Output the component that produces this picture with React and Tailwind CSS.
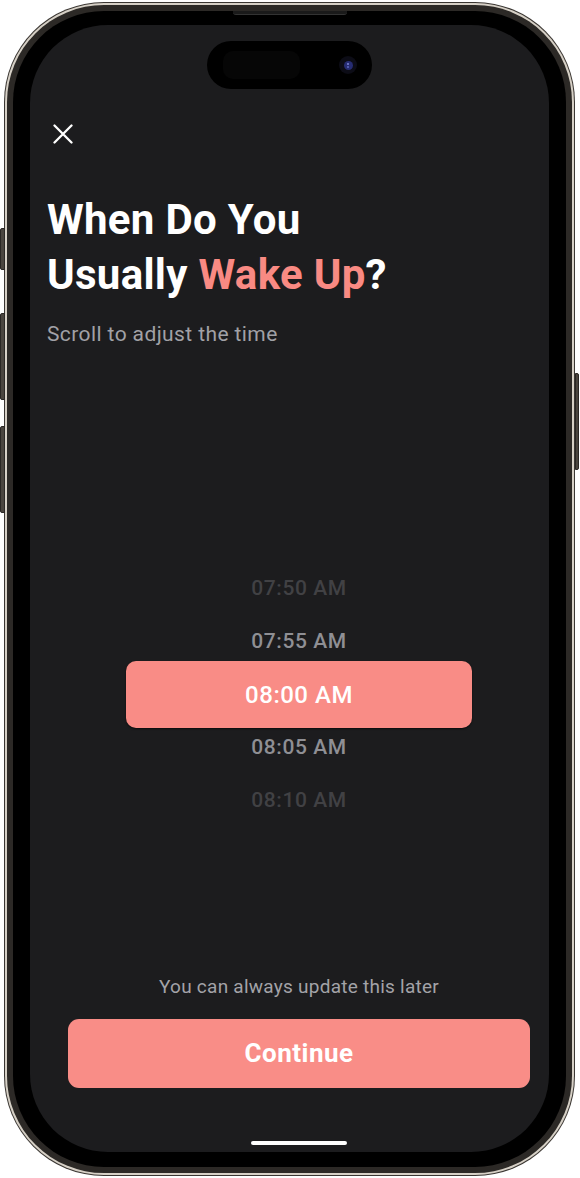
import React from "react";

const times = [
  { label: "07:50 AM", tone: "dim" },
  { label: "07:55 AM", tone: "mid" },
  { label: "08:00 AM", tone: "active" },
  { label: "08:05 AM", tone: "mid" },
  { label: "08:10 AM", tone: "dim" },
];

const CloseIcon = () => (
  <svg width="20" height="20" viewBox="0 0 20 20" fill="none">
    <path
      d="M1.5 1.5L18.5 18.5M18.5 1.5L1.5 18.5"
      stroke="white"
      strokeWidth="2.3"
      strokeLinecap="round"
    />
  </svg>
);

const TimeRow = ({ label, tone }) => {
  if (tone === "active") {
    return (
      <div className="-my-[7px] h-[67px] w-[346px] rounded-[10px] bg-[#f98c86] shadow-[0_1px_2px_rgba(0,0,0,0.6)] flex items-center justify-center">
        <span className="text-[24px] font-medium tracking-[0.5px] text-white">
          {label}
        </span>
      </div>
    );
  }
  return (
    <div
      className={
        "h-[53px] flex items-center justify-center text-[21px] font-medium tracking-[0.6px] " +
        (tone === "dim" ? "text-[#414144]" : "text-[#8f8f94]")
      }
    >
      {label}
    </div>
  );
};

const App = () => {
  return (
    <div className="relative w-[580px] h-[1178px] bg-white overflow-hidden font-['Roboto',sans-serif]">
      {/* side buttons */}
      <div className="absolute left-0 top-[228px] w-[5px] h-[42px] rounded-l-[2px] bg-[#4a453f] border border-[#2a2724]"></div>
      <div className="absolute left-0 top-[313px] w-[5px] h-[87px] rounded-l-[2px] bg-[#4a453f] border border-[#2a2724]"></div>
      <div className="absolute left-0 top-[426px] w-[5px] h-[87px] rounded-l-[2px] bg-[#4a453f] border border-[#2a2724]"></div>
      <div className="absolute right-[1px] top-[373px] w-[4px] h-[97px] rounded-r-[2px] bg-[#4a453f] border border-[#2a2724]"></div>

      <div className="pt-[2px] pl-[4px]">
        {/* frame */}
        <div className="w-[571px] h-[1174px] rounded-[100px] bg-[#3a3632] p-[1px]">
          <div className="w-full h-full rounded-[99px] bg-[#d6d0c6] p-[2px]">
            <div className="w-full h-full rounded-[97px] bg-[#2c2926] p-[6px]">
              <div className="relative w-full h-full rounded-[91px] bg-black px-[17px] py-[14px]">
                <div className="absolute top-0 left-1/2 -translate-x-1/2 w-[114px] h-[4px] rounded-b-[3px] bg-[#1a1a1a] border-b border-[#333]"></div>

                {/* screen */}
                <div className="w-[519px] h-[1127px] rounded-[78px] bg-[#1c1c1e] overflow-hidden flex flex-col">
                  <div className="self-center mt-[16px] h-[48px] w-[165px] rounded-full bg-black flex items-center justify-between pl-[16px] pr-[15px]">
                    <div className="w-[77px] h-[28px] rounded-[10px] bg-[#060606]"></div>
                    <div className="w-[18px] h-[18px] rounded-full bg-[#0c0c16] flex items-center justify-center">
                      <div className="w-[9px] h-[9px] rounded-full bg-[#262c72] flex flex-col items-center justify-center gap-[1px]">
                        <div className="w-[2px] h-[2px] rounded-full bg-[#7c86d8]"></div>
                        <div className="w-[2px] h-[2px] rounded-full bg-[#5c66c0]"></div>
                      </div>
                    </div>
                  </div>

                  <div className="ml-[17px] w-[504px] flex-1 flex flex-col">
                    <div className="mt-[35px] ml-[6px] w-[20px] h-[20px]">
                      <CloseIcon />
                    </div>

                    <h1 className="mt-[48px] text-[42px] leading-[55px] font-bold tracking-[0.3px] text-white">
                      When Do You
                      <br />
                      Usually <span className="text-[#f98a83]">Wake Up</span>?
                    </h1>
                    <p className="mt-[18px] text-[21px] leading-[28px] tracking-[0.4px] text-[#a1a1a6]">
                      Scroll to adjust the time
                    </p>

                    <div className="mt-[214px] flex flex-col items-center">
                      {times.map((t) => (
                        <TimeRow key={t.label} label={t.label} tone={t.tone} />
                      ))}
                    </div>

                    <div className="flex-1"></div>

                    <p className="text-center text-[19px] leading-[24px] tracking-[0.25px] text-[#a3a3a8]">
                      You can always update this later
                    </p>
                    <button className="mt-[20px] mx-[21px] h-[69px] rounded-[11px] bg-[#f98d87] text-white text-[26px] font-bold tracking-[0.5px]">
                      Continue
                    </button>
                    <div className="self-center mt-[53px] mb-[7px] h-[4px] w-[96px] rounded-full bg-white"></div>
                  </div>
                </div>
              </div>
            </div>
          </div>
        </div>
      </div>
    </div>
  );
};

export default App;
